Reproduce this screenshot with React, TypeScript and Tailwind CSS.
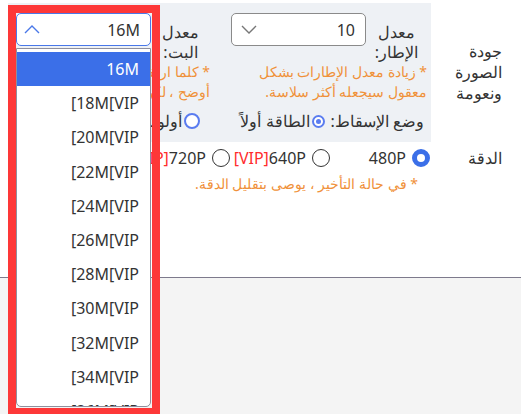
const bitrates = ["18M", "20M", "22M", "24M", "26M", "28M", "30M", "32M", "34M", "36M"];

function Chevron({ up, color }: { up?: boolean; color: string }) {
    return (
        <svg width="16" height="9" viewBox="0 0 16 9" fill="none" stroke={color} strokeWidth="1.4" className="shrink-0">
            <polyline points={up ? "1,8 8,1 15,8" : "1,1 8,8 15,1"} />
        </svg>
    );
}

function SettingRadio({ checked }: { checked: boolean }) {
    if (checked) {
        return <span className="w-[18px] h-[18px] shrink-0 rounded-full border-[5px] border-[#3b6fe8] bg-white" />;
    }
    return <span className="w-[18px] h-[18px] shrink-0 rounded-full border border-[#333] bg-white" />;
}

export default function App() {
    return (
        <div
            dir="rtl"
            className="relative w-[521px] h-[414px] overflow-hidden bg-[#f4f4f4] text-[#333] text-[16px]"
            style={{ fontFamily: '"Noto Sans", sans-serif' }}
        >
            <div className="h-[278px] bg-white border-b border-[#7d7a8c] pt-[3px] pl-2 grid grid-cols-[90px_423px] content-start">
                {/* quality row */}
                <div className="flex items-center pr-[19px]">
                    <div className="w-[48px] leading-[21px]">جودة الصورة ونعومة</div>
                </div>
                <div className="bg-[#eef1f5] pt-[10px] pr-[4px] pl-[8px] pb-[11px]">
                    <div className="flex gap-[21px]">
                        <div className="w-[196px]">
                            <div className="flex items-start">
                                <div className="w-[61px] shrink-0 text-center pt-[9px] leading-[20px]">معدل الإطار:</div>
                                <div className="w-[135px] h-[33px] flex items-center justify-between pr-[10px] pl-[9px] bg-white border border-[#8a8a8a] rounded-[5px]">
                                    <span>10</span>
                                    <Chevron color="#777" />
                                </div>
                            </div>
                            <div className="text-[14px] leading-[20px] text-[#f0913a] whitespace-nowrap overflow-hidden">
                                <div>* زيادة معدل الإطارات بشكل</div>
                                <div>معقول سيجعله أكثر سلاسة.</div>
                            </div>
                        </div>
                        <div className="w-[194px]">
                            <div className="flex items-start">
                                <div className="w-[59px] shrink-0 text-center pt-[9px] leading-[20px]">معدل البت:</div>
                                <div className="w-[135px] h-[33px] flex items-center justify-between pr-[10px] pl-[7px] bg-white border border-[#4a78e8] rounded-[5px]">
                                    <span>16M</span>
                                    <Chevron up color="#4a78e8" />
                                </div>
                            </div>
                            <div className="text-[14px] leading-[20px] text-[#f0913a] whitespace-nowrap overflow-hidden">
                                <div>* كلما ارتفع معدل البت، كانت الصورة</div>
                                <div>أوضح ، لكن قد يزداد التأخير.</div>
                            </div>
                        </div>
                    </div>
                    <div className="flex items-center h-[20px] mt-[9px] pr-[3px] whitespace-nowrap overflow-hidden">
                        <span>وضع الإسقاط:</span>
                        <span className="mr-[6px] w-[13px] h-[13px] shrink-0 rounded-full border-2 border-[#5a7cf0] bg-white flex items-center justify-center">
                            <span className="w-[5px] h-[5px] rounded-full bg-[#5a7cf0]" />
                        </span>
                        <span className="mr-[2px]">الطاقة أولاً</span>
                        <span className="mr-[40px] w-[16px] h-[16px] shrink-0 rounded-full border-[2.5px] border-[#5a7cf0] bg-white" />
                        <span className="mr-[2px]">أولوية الجودة</span>
                    </div>
                </div>

                {/* resolution row */}
                <div className="flex items-center pr-[19px] h-[20px] mt-[6px]">الدقة</div>
                <div className="mt-[6px]">
                    <div className="flex h-[20px] items-center">
                        <label className="w-[100px] flex items-center gap-[6px] pr-[1px]">
                            <SettingRadio checked />
                            <span>480P</span>
                        </label>
                        <label className="w-[100px] flex items-center gap-[6px] pr-[1px]">
                            <SettingRadio checked={false} />
                            <span dir="ltr"><span className="text-[#ff2d2d]">[VIP]</span>640P</span>
                        </label>
                        <label className="w-[100px] flex items-center gap-[6px] pr-[1px]">
                            <SettingRadio checked={false} />
                            <span dir="ltr"><span className="text-[#ff2d2d]">[VIP]</span>720P</span>
                        </label>
                    </div>
                    <div className="mt-[6px] pr-[13px] text-[14px] leading-[20px] text-[#f0913a]">
                        * في حالة التأخير ، يوصى بتقليل الدقة.
                    </div>
                </div>
            </div>

            {/* open bitrate list */}
            <div className="absolute left-[16px] top-[48px] w-[135px] h-[359px] bg-white border border-[#8f8f9d] rounded-b-[5px] pt-[3px] overflow-hidden">
                <div className="h-[34.2px] flex items-center pr-[11px] bg-[#3b6fe8] text-white">16M</div>
                {bitrates.map((b) => (
                    <div key={b} className="h-[34.2px] flex items-center pr-[11px]">
                        <span dir="ltr">[{b}[VIP</span>
                    </div>
                ))}
            </div>

            {/* highlight frame */}
            <div className="absolute left-[8px] top-[5px] w-[152px] h-[411px] border-8 border-[#fd3838] pointer-events-none" />
        </div>
    );
}
